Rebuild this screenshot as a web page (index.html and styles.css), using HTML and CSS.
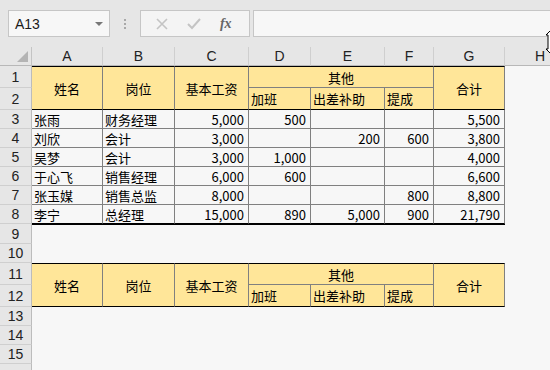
FILE: index.html
```html
<!DOCTYPE html>
<html lang="zh">
<head>
<meta charset="utf-8">
<link rel="stylesheet" href="styles.css">
</head>
<body>
<div class="fbar">
  <div class="namebox"><span class="ref">A13</span><span class="dd"></span></div>
  <div class="dots"><i></i><i></i><i></i></div>
  <div class="btns">
    <svg class="ico" width="12" height="12" viewBox="0 0 12 12"><path d="M1 1L11 11M11 1L1 11" stroke="#c4c4c4" stroke-width="1.6" fill="none"/></svg>
    <svg class="ico" width="14" height="12" viewBox="0 0 14 12"><path d="M1 6L5 10L13 1" stroke="#c4c4c4" stroke-width="2" fill="none"/></svg>
    <span class="fx">fx</span>
  </div>
  <div class="formula"></div>
</div>
<svg class="cursor" width="10" height="24" viewBox="0 0 10 24"><path d="M9 1L5 5H7V19H5L9 23" stroke="#000" stroke-width="1" fill="#fff"/></svg>
<div class="sheet">
  <div class="corner"><span class="tri"></span></div>
  <div class="ch">A</div><div class="ch">B</div><div class="ch">C</div><div class="ch">D</div><div class="ch">E</div><div class="ch">F</div><div class="ch">G</div><div class="ch">H</div>

  <div class="rh">1</div>
  <div class="hd top tall">姓名</div>
  <div class="hd top tall">岗位</div>
  <div class="hd top tall">基本工资</div>
  <div class="hd top wide">其他</div>
  <div class="hd top tall">合计</div>
  <div class="rh">2</div>
  <div class="hd sub">加班</div>
  <div class="hd sub">出差补助</div>
  <div class="hd sub">提成</div>

  <div class="rh">3</div>
  <div class="c t">张雨</div><div class="c t">财务经理</div><div class="c n">5,000</div><div class="c n">500</div><div class="c n"></div><div class="c n"></div><div class="c n">5,500</div>
  <div class="rh">4</div>
  <div class="c t">刘欣</div><div class="c t">会计</div><div class="c n">3,000</div><div class="c n"></div><div class="c n">200</div><div class="c n">600</div><div class="c n">3,800</div>
  <div class="rh">5</div>
  <div class="c t">吴梦</div><div class="c t">会计</div><div class="c n">3,000</div><div class="c n">1,000</div><div class="c n"></div><div class="c n"></div><div class="c n">4,000</div>
  <div class="rh">6</div>
  <div class="c t">于心飞</div><div class="c t">销售经理</div><div class="c n">6,000</div><div class="c n">600</div><div class="c n"></div><div class="c n"></div><div class="c n">6,600</div>
  <div class="rh">7</div>
  <div class="c t">张玉媒</div><div class="c t">销售总监</div><div class="c n">8,000</div><div class="c n"></div><div class="c n"></div><div class="c n">800</div><div class="c n">8,800</div>
  <div class="rh">8</div>
  <div class="c t last">李宁</div><div class="c t last">总经理</div><div class="c n last">15,000</div><div class="c n last">890</div><div class="c n last">5,000</div><div class="c n last">900</div><div class="c n last">21,790</div>

  <div class="rh">9</div>
  <div class="rh">10</div>

  <div class="rh">11</div>
  <div class="hd top tall">姓名</div>
  <div class="hd top tall">岗位</div>
  <div class="hd top tall">基本工资</div>
  <div class="hd top wide">其他</div>
  <div class="hd top tall">合计</div>
  <div class="rh">12</div>
  <div class="hd sub">加班</div>
  <div class="hd sub">出差补助</div>
  <div class="hd sub">提成</div>

  <div class="rh">13</div>
  <div class="rh">14</div>
  <div class="rh">15</div>
  <div class="rh"></div>
</div>
</body>
</html>
```
FILE: styles.css
```css
* { box-sizing: border-box; }
html, body { margin: 0; padding: 0; }
body {
  width: 550px;
  height: 370px;
  overflow: hidden;
  background: #f7f7f7;
  font-family: "Noto Sans CJK SC", "Liberation Sans", sans-serif;
  font-size: 13px;
  color: #000;
  position: relative;
}
.fbar {
  height: 47px;
  background: #e6e6e6;
  display: flex;
  align-items: flex-start;
  padding: 10px 0 0 8px;
}
.namebox {
  width: 102px;
  height: 27px;
  border: 1px solid #c6c6c6;
  background: #f7f7f7;
  display: flex;
  align-items: center;
  justify-content: space-between;
  padding: 0 6px 0 6px;
}
.ref {
  font-family: "Liberation Sans", sans-serif;
  font-size: 14px;
  color: #1a1a1a;
}
.dd {
  width: 0; height: 0;
  border-left: 4px solid transparent;
  border-right: 4px solid transparent;
  border-top: 4px solid #777;
}
.dots {
  width: 30px;
  height: 27px;
  display: flex;
  flex-direction: column;
  align-items: center;
  justify-content: center;
  gap: 2px;
}
.dots i {
  display: block;
  width: 2px;
  height: 2px;
  background: #a8a8a8;
}
.btns {
  width: 110px;
  height: 27px;
  border: 1px solid #c6c6c6;
  background: #f4f4f4;
  display: flex;
  align-items: center;
  justify-content: space-around;
  padding: 0 8px 0 6px;
}
.fx {
  font-family: "Liberation Serif", serif;
  font-style: italic;
  font-weight: bold;
  font-size: 14px;
  color: #666;
}
.formula {
  margin-left: 3px;
  flex: 1;
  height: 27px;
  border: 1px solid #c6c6c6;
  border-right: none;
  background: #f7f7f7;
}
.cursor {
  position: absolute;
  left: 541px;
  top: 30px;
}
.sheet {
  display: grid;
  grid-template-columns: 32px 71px 72px 74px 62px 74px 49px 71px 71px;
  grid-template-rows: 19px 22px 22px 19px 19px 19px 19px 19px 19px 20px 19px 22px 22px 19px 19px 19px 19px;
}
.corner {
  grid-column: 1;
  background: #e6e6e6;
  border-right: 1px solid #c4c4c4;
  border-bottom: 1px solid #b8b8b8;
  position: relative;
}
.tri {
  position: absolute;
  right: 3px;
  bottom: 3px;
  width: 0; height: 0;
  border-left: 11px solid transparent;
  border-bottom: 11px solid #b4b4b4;
}
.ch {
  background: #e6e6e6;
  border-right: 1px solid #cfcfcf;
  border-bottom: 1px solid #b8b8b8;
  display: flex;
  align-items: center;
  justify-content: center;
  font-family: "Liberation Sans", sans-serif;
  font-size: 14px;
  color: #222;
}
.rh {
  grid-column: 1;
  background: #e6e6e6;
  border-right: 1px solid #bcbcbc;
  border-bottom: 1px solid #cfcfcf;
  display: flex;
  align-items: center;
  justify-content: center;
  font-family: "Liberation Sans", sans-serif;
  font-size: 14px;
  color: #222;
}
.hd {
  background: #ffe699;
  border-right: 1px solid #808080;
  display: flex;
  align-items: center;
  justify-content: center;
}
.top { border-top: 1px solid #000; }
.tall {
  grid-row: span 2;
  border-bottom: 1px solid #000;
}
.wide {
  grid-column: span 3;
  border-bottom: 1px solid #808080;
}
.sub {
  justify-content: flex-start;
  padding-left: 2px;
  border-bottom: 1px solid #000;
}
.c {
  border-right: 1px solid #808080;
  border-bottom: 1px solid #808080;
  display: flex;
  align-items: center;
  white-space: nowrap;
}
.t { padding-left: 2px; }
.n { justify-content: flex-end; padding-right: 4px; }
.last {
  border-bottom: 1px solid #000;
  box-shadow: 0 1px 0 #000;
}
```
